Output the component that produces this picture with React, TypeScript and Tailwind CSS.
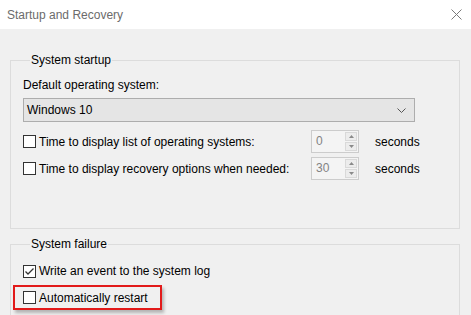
import React from 'react';

function CheckBox({ checked = false }: { checked?: boolean }) {
  return (
    <span className="w-[13px] h-[13px] border border-[#333333] bg-white shrink-0 flex items-center justify-center">
      {checked && (
        <svg width="11" height="11" viewBox="0 0 11 11">
          <path d="M1.5 5.5 L4 8 L9.5 2.5" fill="none" stroke="#333333" strokeWidth="1.3" />
        </svg>
      )}
    </span>
  );
}

function SpinBox({ value }: { value: string }) {
  return (
    <div className="w-[48px] h-[23px] border border-[#cccccc] bg-[#f4f4f4] flex items-stretch">
      <span className="flex-1 pl-[4px] leading-[21px] text-[#838383]">{value}</span>
      <div className="w-[12px] flex flex-col gap-[1px] py-[1px] mr-[1px]">
        <div className="flex-1 border border-[#d9d9d9] bg-[#ececec] flex items-center justify-center">
          <svg width="5" height="3" viewBox="0 0 5 3"><path d="M0 3 L2.5 0 L5 3Z" fill="#8a8a8a" /></svg>
        </div>
        <div className="flex-1 border border-[#d9d9d9] bg-[#ececec] flex items-center justify-center">
          <svg width="5" height="3" viewBox="0 0 5 3"><path d="M0 0 L2.5 3 L5 0Z" fill="#8a8a8a" /></svg>
        </div>
      </div>
    </div>
  );
}

function TimeRow({ label, value }: { label: string; value: string }) {
  return (
    <div className="flex items-center h-[23px]">
      <div className="w-[288px] flex items-center gap-[3px]">
        <CheckBox />
        <span>{label}</span>
      </div>
      <SpinBox value={value} />
      <span className="ml-[16px]">seconds</span>
    </div>
  );
}

function GroupLabel({ text }: { text: string }) {
  return (
    <span className="block w-fit -mt-[9px] ml-[7px] px-[1px] bg-[#f0f0f0] leading-[16px]">{text}</span>
  );
}

export default function App() {
  return (
    <div
      className="w-[471px] h-[315px] overflow-hidden bg-[#f0f0f0] text-[12px] text-black flex flex-col"
      style={{ fontFamily: '"Liberation Sans", Arial, sans-serif' }}
    >
      <div className="h-[29px] bg-white flex items-center justify-between pl-[7px] pr-[9px] shrink-0">
        <span className="text-[#6b6b6b]">Startup and Recovery</span>
        <svg width="11" height="11" viewBox="0 0 11 11">
          <path d="M0.5 0.5 L10.5 10.5 M10.5 0.5 L0.5 10.5" stroke="#7a7a7a" strokeWidth="1" />
        </svg>
      </div>

      <div className="pl-[10px] pr-[11px] pt-[31px] flex flex-col">
        <div className="h-[169px] border border-[#dcdcdc] pl-[12px]">
          <GroupLabel text="System startup" />
          <div className="mt-[9px] leading-[16px]">Default operating system:</div>
          <div className="mt-[5px] w-[392px] h-[24px] border border-[#adadad] bg-[#e5e5e5] flex items-center justify-between pl-[3px] pr-[8px]">
            <span>Windows 10</span>
            <svg width="9" height="5" viewBox="0 0 9 5">
              <path d="M0.5 0.5 L4.5 4.5 L8.5 0.5" fill="none" stroke="#555555" strokeWidth="1" />
            </svg>
          </div>
          <div className="mt-[8px] flex flex-col gap-[4px]">
            <TimeRow label="Time to display list of operating systems:" value="0" />
            <TimeRow label="Time to display recovery options when needed:" value="30" />
          </div>
        </div>

        <div className="mt-[15px] h-[100px] border border-[#dcdcdc] pl-[12px]">
          <GroupLabel text="System failure" />
          <div className="mt-[11px] flex items-center gap-[3px] h-[16px]">
            <CheckBox checked />
            <span>Write an event to the system log</span>
          </div>
          <div className="mt-[6px] -ml-[10px] w-[149px] h-[25px] border-2 border-[#e21a1a] flex items-center gap-[3px] pl-[8px] shadow-[2px_3px_3px_rgba(0,0,0,0.25)]">
            <CheckBox />
            <span>Automatically restart</span>
          </div>
        </div>
      </div>
    </div>
  );
}
